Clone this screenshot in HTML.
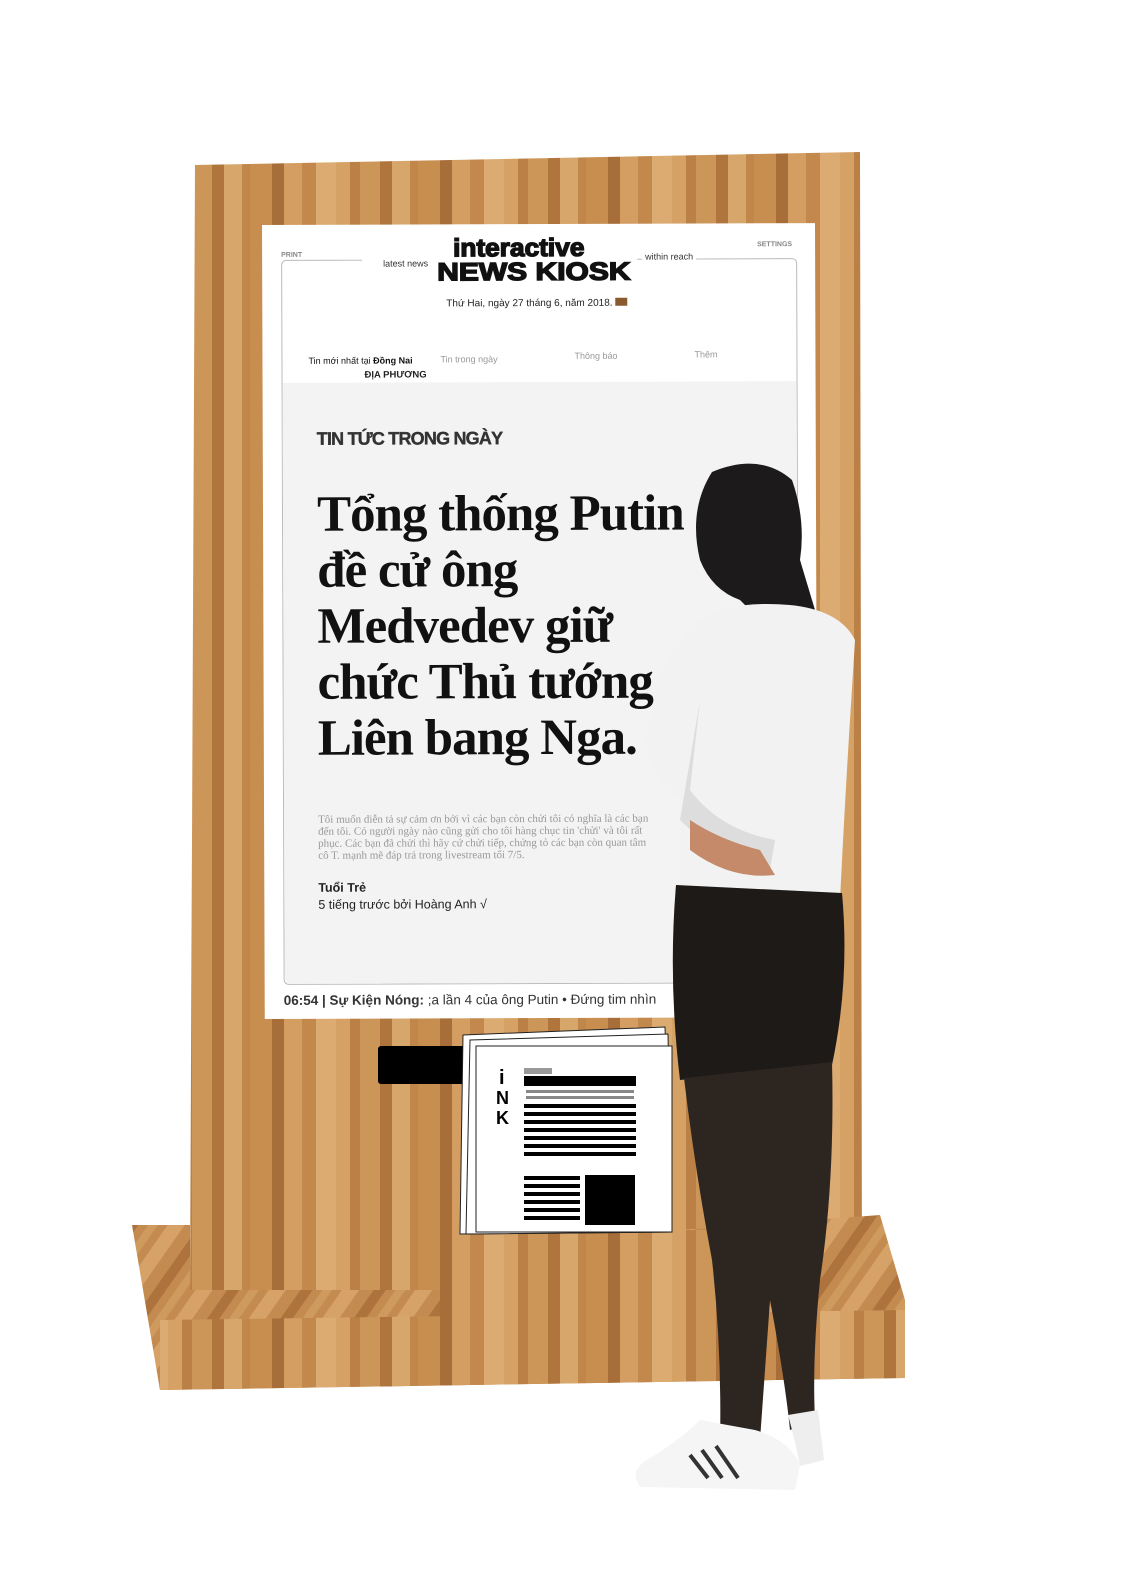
<!DOCTYPE html>
<html><head><meta charset="utf-8"><style>
*{margin:0;padding:0;box-sizing:border-box}
body{width:1124px;height:1578px;background:#fff;position:relative;overflow:hidden;font-family:"Liberation Sans","DejaVu Sans",sans-serif}
svg{position:absolute;left:0;top:0}
.scr{position:absolute;left:262px;top:225px;width:553px;height:794px;background:#fff;transform:rotate(-0.2deg);transform-origin:0 0}
.t{position:absolute;white-space:nowrap}
</style></head><body>
<svg width="1124" height="1578" viewBox="0 0 1124 1578">
<defs>
<pattern id="w" width="168" height="40" patternUnits="userSpaceOnUse">
<rect width="168" height="40" fill="#c99053"/>
<rect x="0" width="14" height="40" fill="#d6a165"/>
<rect x="14" width="10" height="40" fill="#bb8046"/>
<rect x="24" width="20" height="40" fill="#cd9659"/>
<rect x="44" width="12" height="40" fill="#b0743d"/>
<rect x="56" width="18" height="40" fill="#d7a66b"/>
<rect x="74" width="8" height="40" fill="#c0864a"/>
<rect x="82" width="22" height="40" fill="#c88e50"/>
<rect x="104" width="12" height="40" fill="#a86e3a"/>
<rect x="116" width="18" height="40" fill="#d49e62"/>
<rect x="134" width="14" height="40" fill="#c3884b"/>
<rect x="148" width="20" height="40" fill="#dbab72"/>
</pattern>
<pattern id="wd" width="60" height="60" patternUnits="userSpaceOnUse" patternTransform="rotate(35)">
<rect width="60" height="60" fill="#c48b50"/>
<rect width="14" height="60" fill="#d6a267"/>
<rect x="26" width="10" height="60" fill="#ae733d"/>
<rect x="44" width="8" height="60" fill="#cf9a5d"/>
</pattern>
</defs>
<polygon points="195,165 860,152 862,1290 190,1290" fill="url(#w)"/>
<polygon points="132,1225 190,1225 190,1290 460,1290 460,1240 680,1230 880,1215 905,1300 905,1378 160,1390" fill="url(#wd)"/>
<polygon points="160,1320 905,1310 905,1378 160,1390" fill="url(#w)"/>
<polygon points="440,1230 720,1230 720,1320 440,1320" fill="url(#w)"/>
<rect x="378" y="1046" width="90" height="38" rx="3" fill="#000"/>
<polygon points="463,1035 665,1027 672,1232 460,1234" fill="#fff" stroke="#222" stroke-width="1"/>
<polygon points="470,1040 668,1034 672,1232 466,1234" fill="#fff" stroke="#222" stroke-width="1"/>
<rect x="476" y="1046" width="196" height="186" fill="#fff" stroke="#222" stroke-width="1"/>
<text x="499" y="1084" font-family="Liberation Sans" font-weight="bold" font-size="20">i</text>
<text x="496" y="1104" font-family="Liberation Sans" font-weight="bold" font-size="18">N</text>
<text x="496" y="1124" font-family="Liberation Sans" font-weight="bold" font-size="18">K</text>
<rect x="524" y="1068" width="28" height="6" fill="#999"/>
<rect x="524" y="1076" width="112" height="10" fill="#000"/>
<g fill="#000"><rect x="524" y="1104" width="112" height="4"/><rect x="524" y="1112" width="112" height="4"/><rect x="524" y="1120" width="112" height="4"/><rect x="524" y="1128" width="112" height="4"/><rect x="524" y="1136" width="112" height="4"/><rect x="524" y="1144" width="112" height="4"/><rect x="524" y="1152" width="112" height="4"/><rect x="524" y="1176" width="56" height="4"/><rect x="524" y="1184" width="56" height="4"/><rect x="524" y="1192" width="56" height="4"/><rect x="524" y="1200" width="56" height="4"/><rect x="524" y="1208" width="56" height="4"/><rect x="524" y="1216" width="56" height="4"/><rect x="585" y="1175" width="50" height="50"/></g>
<g fill="#888"><rect x="526" y="1090" width="108" height="3"/><rect x="526" y="1096" width="108" height="3"/></g>
</svg>
<div class="scr">
<div class="t" style="left:19px;top:27px;font-size:7px;color:#888;font-weight:bold">PRINT</div>
<div class="t" style="left:495px;top:18px;font-size:7px;color:#888;font-weight:bold">SETTINGS</div>
<div style="position:absolute;left:19px;top:35px;width:516px;height:725px;border:1px solid #bbb;border-radius:5px;background:#fff"></div>
<div style="position:absolute;left:20px;top:158px;width:514px;height:601px;background:#f3f3f3;border-radius:0 0 5px 5px"></div>
<div class="t" style="left:100px;top:22px;width:80px;height:16px;background:#fff"></div>
<div class="t" style="left:118px;top:34px;font-size:9px;color:#333;background:#fff;padding:0 3px">latest news</div>
<div class="t" style="left:380px;top:28px;font-size:9px;color:#333;background:#fff;padding:0 3px">within reach</div>
<div class="t" style="left:170px;top:14px;width:205px;background:#fff;height:54px"></div>
<div class="t" style="left:191px;top:10px;font-size:25px;font-weight:900;color:#111;-webkit-text-stroke:1.4px #111;transform:scaleX(1.05);transform-origin:0 0">interactive</div>
<div class="t" style="left:175px;top:34px;font-size:25px;font-weight:900;color:#111;-webkit-text-stroke:1.4px #111;transform:scaleX(1.2);transform-origin:0 0">NEWS KIOSK</div>
<div class="t" style="left:184px;top:74px;font-size:10px;color:#222">Thứ Hai, ngày 27 tháng 6, năm 2018. <span style="display:inline-block;width:12px;height:8px;background:#8a5a2e"></span></div>
<div class="t" style="left:46px;top:131px;font-size:9px;color:#111">Tin mới nhất tại <b>Đồng Nai</b></div>
<div class="t" style="left:102px;top:145px;font-size:9.5px;color:#222;font-weight:bold">ĐỊA PHƯƠNG</div>
<div class="t" style="left:178px;top:130px;font-size:9px;color:#999">Tin trong ngày</div>
<div class="t" style="left:312px;top:127px;font-size:9px;color:#999">Thông báo</div>
<div class="t" style="left:432px;top:126px;font-size:9px;color:#999">Thêm</div>
<div class="t" style="left:54px;top:204px;font-size:18px;font-weight:bold;color:#333;letter-spacing:-0.8px;-webkit-text-stroke:0.4px #333">TIN TỨC TRONG NGÀY</div>
<div class="t" style="left:54px;top:262px;font-family:'Liberation Serif',serif;font-size:51px;font-weight:bold;line-height:56px;color:#111;letter-spacing:-1px">Tổng thống Putin<br>đề cử ông<br>Medvedev giữ<br>chức Thủ tướng<br>Liên bang Nga.</div>
<div class="t" style="left:54px;top:589px;font-family:'Liberation Serif',serif;font-size:11px;line-height:12px;color:#999">Tôi muốn diễn tả sự cảm ơn bởi vì các bạn còn chửi tôi có nghĩa là các bạn<br>đến tôi. Có người ngày nào cũng gửi cho tôi hàng chục tin 'chửi' và tôi rất<br>phục. Các bạn đã chửi thì hãy cứ chửi tiếp, chứng tỏ các bạn còn quan tâm<br>cô T. mạnh mẽ đáp trả trong livestream tối 7/5.</div>
<div class="t" style="left:54px;top:656px;font-size:12.5px;font-weight:bold;color:#222">Tuổi Trẻ</div>
<div class="t" style="left:54px;top:673px;font-size:12.5px;color:#222">5 tiếng trước bởi Hoàng Anh √</div>
<div class="t" style="left:19px;top:768px;font-size:13.5px;color:#333"><b>06:54 | Sự Kiện Nóng:</b> ;a lần 4 của ông Putin • Đứng tim nhìn</div>
</div>
<svg width="1124" height="1578" viewBox="0 0 1124 1578">
<path d="M712,472 Q760,452 792,480 Q806,520 800,560 L815,610 L760,620 L740,600 Q712,590 700,560 Q688,510 712,472Z" fill="#1c1a1a"/>
<path d="M700,620 Q730,600 790,605 Q840,610 855,640 L850,720 Q845,800 840,900 L680,895 L682,800 Q650,780 646,740 Q660,650 700,620Z" fill="#f2f2f2"/>
<path d="M700,700 L690,790 Q720,830 775,840 L770,870 Q720,860 680,820 Z" fill="#ddd"/>
<path d="M690,820 Q720,840 760,850 L775,875 Q730,880 690,850Z" fill="#c48a6a"/>
<path d="M676,885 L842,893 Q850,980 832,1065 L680,1080 Q668,980 676,885Z" fill="#1e1a18"/>
<path d="M684,1078 L832,1062 Q835,1180 820,1280 Q812,1360 815,1420 L790,1430 Q785,1380 770,1300 L760,1440 L720,1445 Q722,1350 712,1260 Q695,1170 684,1078Z" fill="#2d2520"/>
<path d="M700,1420 L755,1430 Q790,1440 800,1465 L795,1490 L640,1487 Q628,1470 650,1458 Q680,1440 700,1420Z" fill="#f5f5f5"/>
<path d="M788,1415 L818,1410 L824,1460 L800,1466 Q795,1440 788,1415Z" fill="#eee"/>
<g stroke="#333" stroke-width="4"><line x1="690" y1="1455" x2="708" y2="1478"/><line x1="702" y1="1450" x2="722" y2="1478"/><line x1="716" y1="1446" x2="738" y2="1478"/></g>
</svg>
</body></html>
